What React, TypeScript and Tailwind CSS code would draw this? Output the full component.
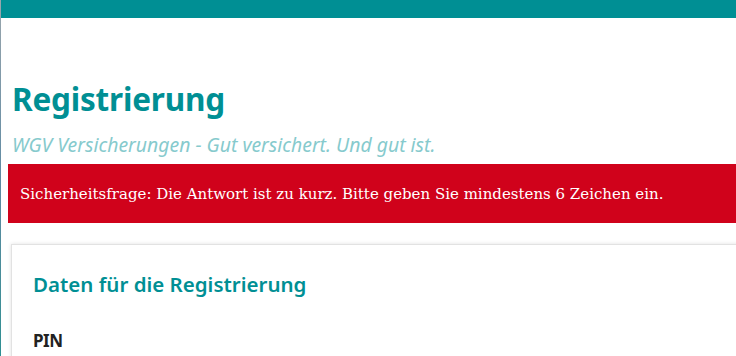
export default function App() {
  return (
    <div className="relative h-[356px] w-[736px] overflow-hidden bg-white font-['Noto_Sans',sans-serif]">
      {/* Streifen links */}
      <div className="absolute left-0 top-0 h-full w-px bg-gradient-to-b from-[#9aa6ad] via-[#5f8aa3] to-[#2c8f92]" />

      {/* Kopfleiste */}
      <div className="h-[18px] bg-[#008f94]" />

      <div className="w-[780px] pl-2">
        <div className="pl-1 pt-[61px]">
          <h1 className="text-[31.5px] font-bold leading-[40px] tracking-[-0.2px] text-[#008f94]">Registrierung</h1>
          <p className="mt-[14px] text-[19.4px] italic leading-[24px] text-[#86cacd]">
            WGV Versicherungen - Gut versichert. Und gut ist.
          </p>
        </div>

        <div className="mt-[7px] flex h-[59px] items-center bg-[#d0021b] pl-3 pt-[2px] font-['DejaVu_Serif',serif] text-[15px] text-white">
          Sicherheitsfrage: Die Antwort ist zu kurz. Bitte geben Sie mindestens 6 Zeichen ein.
        </div>

        <div className="ml-[3px] mt-[21px] border border-[#e2e2e2] px-[21px] pt-[24px] pb-10 shadow-[0_0_4px_rgba(0,0,0,0.12)]">
          <h2 className="text-[20.5px] font-semibold leading-[30px] text-[#008f94]">Daten für die Registrierung</h2>
          <div className="mt-[30px] text-[17px] font-bold leading-[24px] tracking-[-0.5px] text-[#222]">PIN</div>
        </div>
      </div>
    </div>
  );
}
